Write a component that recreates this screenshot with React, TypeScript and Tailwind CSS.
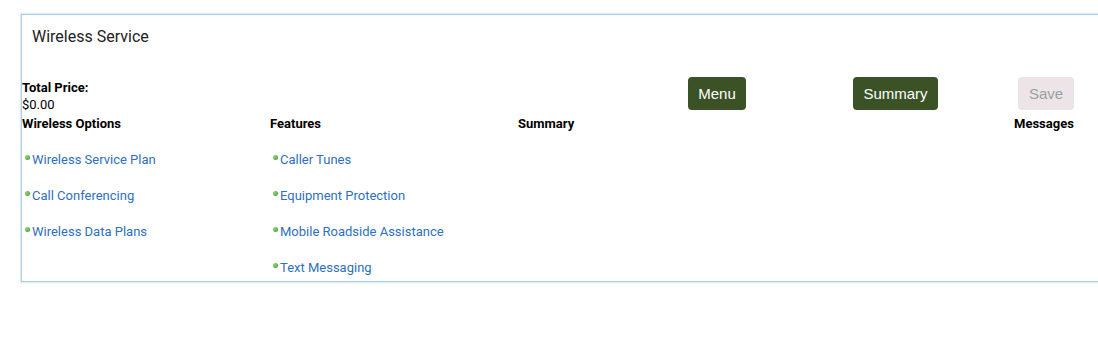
import React from "react";

const options = ["Wireless Service Plan", "Call Conferencing", "Wireless Data Plans"];
const features = ["Caller Tunes", "Equipment Protection", "Mobile Roadside Assistance", "Text Messaging"];

function Item({ label }: { label: string }) {
  return (
    <li className="flex items-start leading-[17px]">
      <span className="mt-[4px] ml-[3px] mr-[2px] h-[5px] w-[5px] shrink-0 rounded-full bg-[radial-gradient(circle_at_35%_35%,#8fd36f,#3c9a2a)]" />
      <a className="text-[13px] text-[#2f6fc0] cursor-pointer">{label}</a>
    </li>
  );
}

export default function App() {
  return (
    <div className="w-full overflow-hidden bg-white font-['Roboto',sans-serif] min-h-[346px]">
      <div className="mt-[14px] ml-[21px] w-[1090px] border border-[#a6d1e8] shadow-[0_0_1px_1px_rgba(200,215,225,0.5)]">
        <div className="pt-[12px] pl-[10px] text-[16px] leading-[20px] text-[#222]">Wireless Service</div>
        <div className="mt-[30px] flex items-start">
          <div className="mt-[2px] w-[666px] text-[13px] leading-[17px] text-black">
            <div className="font-bold">Total Price:</div>
            <div>$0.00</div>
          </div>
          <button className="h-[33px] w-[58px] rounded-[4px] bg-[#3a5225] pt-[2px] font-['Liberation_Sans',sans-serif] text-[15px] text-white">Menu</button>
          <button className="ml-[107px] h-[33px] w-[85px] rounded-[4px] bg-[#3a5225] pt-[2px] font-['Liberation_Sans',sans-serif] text-[15px] text-white">Summary</button>
          <button className="ml-[80px] h-[33px] w-[56px] rounded-[4px] bg-[#ece4e6] pt-[2px] font-['Liberation_Sans',sans-serif] text-[15px] text-[#9a9ea6]">Save</button>
        </div>
        <div className="mt-[2px] flex text-[13px] font-bold leading-[17px] text-black">
          <div className="w-[248px]">Wireless Options</div>
          <div className="w-[248px]">Features</div>
          <div className="w-[496px]">Summary</div>
          <div className="w-[59px] text-right">Messages</div>
        </div>
        <div className="flex pt-[19px] pb-[5px]">
          <ul className="w-[248px] flex flex-col gap-[19px]">
            {options.map((o) => (
              <Item key={o} label={o} />
            ))}
          </ul>
          <ul className="w-[248px] flex flex-col gap-[19px]">
            {features.map((o) => (
              <Item key={o} label={o} />
            ))}
          </ul>
        </div>
      </div>
    </div>
  );
}
